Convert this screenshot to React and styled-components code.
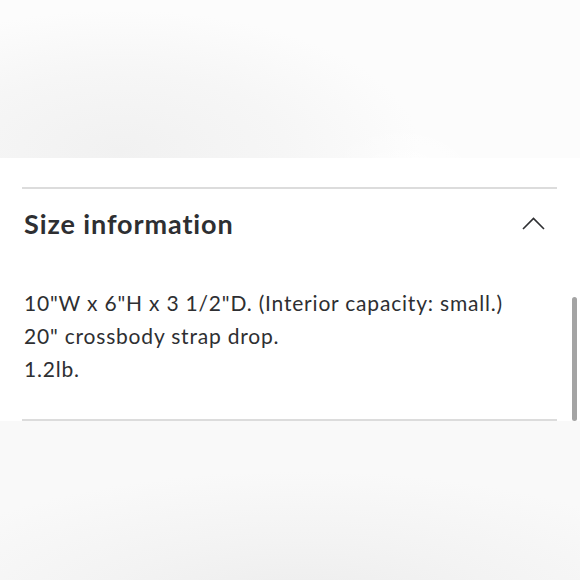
import React from "react";
import styled, { createGlobalStyle } from "styled-components";

const Global = createGlobalStyle`
  html, body { margin: 0; padding: 0; background: #ffffff; }
  body { font-family: Lato, "Open Sans", sans-serif; font-variant-ligatures: none; }
`;

const Page = styled.div`
  position: relative;
  width: 580px;
  height: 580px;
  display: flex;
  flex-direction: column;
  overflow: hidden;
`;

const TopBand = styled.div`
  height: 158px;
  background:
    radial-gradient(ellipse 300px 140px at 120px 150px, #f1f1f1 0%, #f6f6f6 55%, rgba(250,250,250,0) 100%),
    radial-gradient(ellipse 80px 50px at 400px 175px, #ffffff 0%, rgba(255,255,255,0) 100%),
    #fcfcfc;
`;

const Panel = styled.section`
  height: 263px;
  background: #ffffff;
  padding: 29px 23px 0 24px;
  box-sizing: border-box;
  display: flex;
  flex-direction: column;
`;

const Divider = styled.div`
  height: 2px;
  background: #dcdcdc;
  margin-left: -2px;
`;

const Header = styled.div`
  display: flex;
  align-items: center;
  justify-content: space-between;
  height: 72px;
  box-sizing: border-box;
  padding: 0 12px 4px 0;
`;

const Title = styled.h2`
  margin: 0;
  font-family: Lato, sans-serif;
  font-weight: 700;
  font-size: 27px;
  color: #2e2f32;
  letter-spacing: 0.9px;
  font-variant-ligatures: none;
`;

const Body = styled.div`
  font-family: Lato, sans-serif;
  font-size: 21px;
  line-height: 33px;
  letter-spacing: 0.8px;
  color: #2e2f32;
  padding-top: 25px;
  flex: 1;
  font-variant-ligatures: none;
`;

const Line = styled.div``;

const BottomBand = styled.div`
  flex: 1;
  background:
    radial-gradient(ellipse 420px 140px at 300px 190px, #ececec 0%, #f3f3f3 50%, rgba(248,248,248,0) 100%),
    #f9f9f9;
`;

const Scrollbar = styled.div`
  position: absolute;
  left: 572px;
  top: 297px;
  width: 5px;
  height: 124px;
  border-radius: 3px;
  background: #a4a4a4;
`;

function Chevron() {
  return (
    <svg width="24" height="14" viewBox="0 0 24 14" fill="none">
      <path d="M2 13 L12.5 2.5 L23 13" stroke="#2e2f32" strokeWidth="1.6" />
    </svg>
  );
}

export default function App() {
  return (
    <Page>
      <Global />
      <TopBand />
      <Panel>
        <Divider />
        <Header>
          <Title>Size information</Title>
          <Chevron />
        </Header>
        <Body>
          <Line>10"W x 6"H x 3 1/2"D. (Interior capacity: small.)</Line>
          <Line>20" crossbody strap drop.</Line>
          <Line>1.2lb.</Line>
        </Body>
        <Divider />
      </Panel>
      <BottomBand />
      <Scrollbar />
    </Page>
  );
}
